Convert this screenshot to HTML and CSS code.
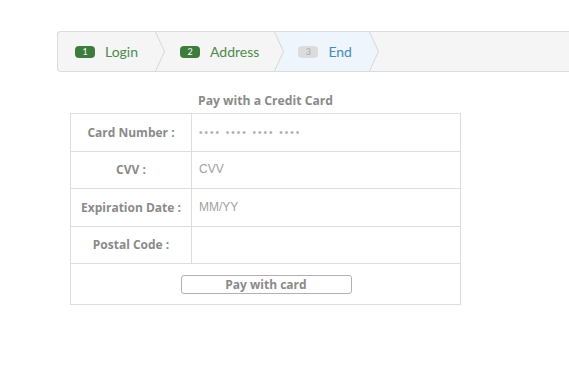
FILE: index.html
```html
<!DOCTYPE html>
<html>
<head>
<meta charset="utf-8">
<link rel="stylesheet" href="styles.css">
</head>
<body>
<div class="page">
  <nav class="steps">
    <div class="step done"><span class="badge">1</span><span class="label">Login</span></div>
    <svg class="sep" width="10" height="39" viewBox="0 0 10 39"><polyline points="0.5,0 9.5,19.5 0.5,39" fill="none" stroke="#d6d6d6" stroke-width="1"/></svg>
    <div class="step done"><span class="badge">2</span><span class="label">Address</span></div>
    <svg class="sep" width="10" height="39" viewBox="0 0 10 39"><polygon points="0.5,0 10,0 10,39 0.5,39 9.5,19.5" fill="#eef5fd"/><polyline points="0.5,0 9.5,19.5 0.5,39" fill="none" stroke="#d6d6d6" stroke-width="1"/></svg>
    <div class="step current"><span class="badge">3</span><span class="label">End</span></div>
    <svg class="sep" width="10" height="39" viewBox="0 0 10 39"><polygon points="0,0 0.5,0 9.5,19.5 0.5,39 0,39" fill="#eef5fd"/><polyline points="0.5,0 9.5,19.5 0.5,39" fill="none" stroke="#d6d6d6" stroke-width="1"/></svg>
  </nav>

  <form class="pay">
    <table class="pay-table">
      <caption>Pay with a Credit Card</caption>
      <tr>
        <th>Card Number :</th>
        <td><span class="ph dots">•••• •••• •••• ••••</span></td>
      </tr>
      <tr>
        <th>CVV :</th>
        <td><span class="ph">CVV</span></td>
      </tr>
      <tr>
        <th>Expiration Date :</th>
        <td><span class="ph">MM/YY</span></td>
      </tr>
      <tr>
        <th>Postal Code :</th>
        <td></td>
      </tr>
      <tr>
        <td class="action" colspan="2"><button type="button" class="btn">Pay with card</button></td>
      </tr>
    </table>
  </form>
</div>
</body>
</html>
```

FILE: styles.css
```css
html, body {
  margin: 0;
  padding: 0;
  background: #fff;
}
body {
  font-family: Lato, "Open Sans", sans-serif;
}
.page {
  padding: 31px 0 0 57px;
}
.steps {
  display: flex;
  align-items: stretch;
  height: 39px;
  border: 1px solid #dcdcdc;
  border-right: none;
  border-radius: 4px 0 0 4px;
  background: #f5f5f5;
}
.sep {
  flex: none;
  display: block;
}
.step {
  display: flex;
  align-items: center;
  gap: 10px;
  font-size: 14px;
}
.step:nth-child(1) { padding: 0 17px 0 17px; }
.step:nth-child(3) { padding: 0 15px 0 15px; }
.step:nth-child(5) { padding: 0 17px 0 14px; }
.badge {
  display: inline-flex;
  align-items: center;
  justify-content: center;
  width: 20px;
  height: 12px;
  border-radius: 4px;
  font-size: 9px;
  color: #fff;
  background: #3d7c3d;
}
.done .label { color: #4e8a4e; }
.current {
  background: #eef5fd;
}
.current .badge {
  background: #dcdcdc;
  color: #a8a8a8;
}
.current .label { color: #4a8ab8; }

.pay {
  padding: 21px 0 0 13px;
}
.pay-table {
  border-collapse: collapse;
  width: 391px;
  font-family: "Open Sans", Lato, sans-serif;
}
.pay-table caption {
  font-size: 12.2px;
  font-weight: bold;
  color: #8a8a8a;
  padding-bottom: 4px;
  line-height: 16px;
}
.pay-table th, .pay-table td {
  border: 1px solid #dedede;
  padding: 0;
}
.pay-table th {
  width: 120px;
  height: 36.5px;
  font-size: 12px;
  font-weight: bold;
  color: #8a8a8a;
  text-align: center;
}
.pay-table td {
  height: 31.5px;
  padding: 0 0 5px 7px;
  vertical-align: middle;
}
.ph {
  font-family: "Liberation Sans", Arial, sans-serif;
  font-size: 12px;
  color: #a0a0a0;
}
.dots {
  letter-spacing: 2px;
  font-size: 10px;
  color: #b0b0b0;
}
.pay-table td.action {
  height: 38px;
  text-align: center;
  padding: 0 0 2px 0;
}
.btn {
  display: inline-block;
  vertical-align: middle;
  width: 171px;
  height: 19px;
  border: 1px solid #b0b0b0;
  border-radius: 3px;
  background: #fff;
  font-family: "Open Sans", Lato, sans-serif;
  font-size: 12px;
  font-weight: bold;
  color: #8a8a8a;
  padding: 0;
  line-height: 16px;
  margin-left: 1px;
}
```
